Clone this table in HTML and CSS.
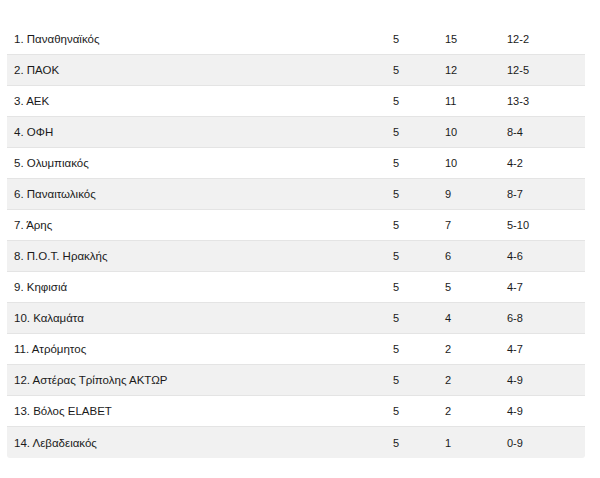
FILE: index.html
```html
<!DOCTYPE html>
<html lang="el">
<head>
<meta charset="utf-8">
<link rel="stylesheet" href="styles.css">
</head>
<body>
<div class="table">
  <div class="row"><span class="name">1. Παναθηναϊκός</span><span>5</span><span>15</span><span>12-2</span></div>
  <div class="row"><span class="name">2. ΠΑΟΚ</span><span>5</span><span>12</span><span>12-5</span></div>
  <div class="row"><span class="name">3. ΑΕΚ</span><span>5</span><span>11</span><span>13-3</span></div>
  <div class="row"><span class="name">4. ΟΦΗ</span><span>5</span><span>10</span><span>8-4</span></div>
  <div class="row"><span class="name">5. Ολυμπιακός</span><span>5</span><span>10</span><span>4-2</span></div>
  <div class="row"><span class="name">6. Παναιτωλικός</span><span>5</span><span>9</span><span>8-7</span></div>
  <div class="row"><span class="name">7. Άρης</span><span>5</span><span>7</span><span>5-10</span></div>
  <div class="row"><span class="name">8. Π.Ο.Τ. Ηρακλής</span><span>5</span><span>6</span><span>4-6</span></div>
  <div class="row"><span class="name">9. Κηφισιά</span><span>5</span><span>5</span><span>4-7</span></div>
  <div class="row"><span class="name">10. Καλαμάτα</span><span>5</span><span>4</span><span>6-8</span></div>
  <div class="row"><span class="name">11. Ατρόμητος</span><span>5</span><span>2</span><span>4-7</span></div>
  <div class="row"><span class="name">12. Αστέρας Τρίπολης ΑΚΤΩΡ</span><span>5</span><span>2</span><span>4-9</span></div>
  <div class="row"><span class="name">13. Βόλος ELABET</span><span>5</span><span>2</span><span>4-9</span></div>
  <div class="row"><span class="name">14. Λεβαδειακός</span><span>5</span><span>1</span><span>0-9</span></div>
</div>
</body>
</html>
```

FILE: styles.css
```css
html, body {
  margin: 0;
  padding: 0;
  background: #ffffff;
}

body {
  padding: 24px 0 0 7px;
  font-family: "Liberation Sans", Arial, sans-serif;
  font-size: 11px;
  color: #1a1a1a;
}

.table {
  width: 578px;
  display: flex;
  flex-direction: column;
}

.row {
  display: grid;
  grid-template-columns: 379px 52px 62px 85px;
  align-items: center;
  height: 30px;
  border-bottom: 1px solid #e4e4e4;
}

.row:nth-child(even) {
  background: #f1f1f1;
}

.row:last-child {
  border-bottom: none;
  height: 31px;
  border-radius: 0 0 3px 3px;
}

.row span {
  padding-left: 7px;
  white-space: nowrap;
}

.row .name {
  font-size: 11.5px;
}
```
